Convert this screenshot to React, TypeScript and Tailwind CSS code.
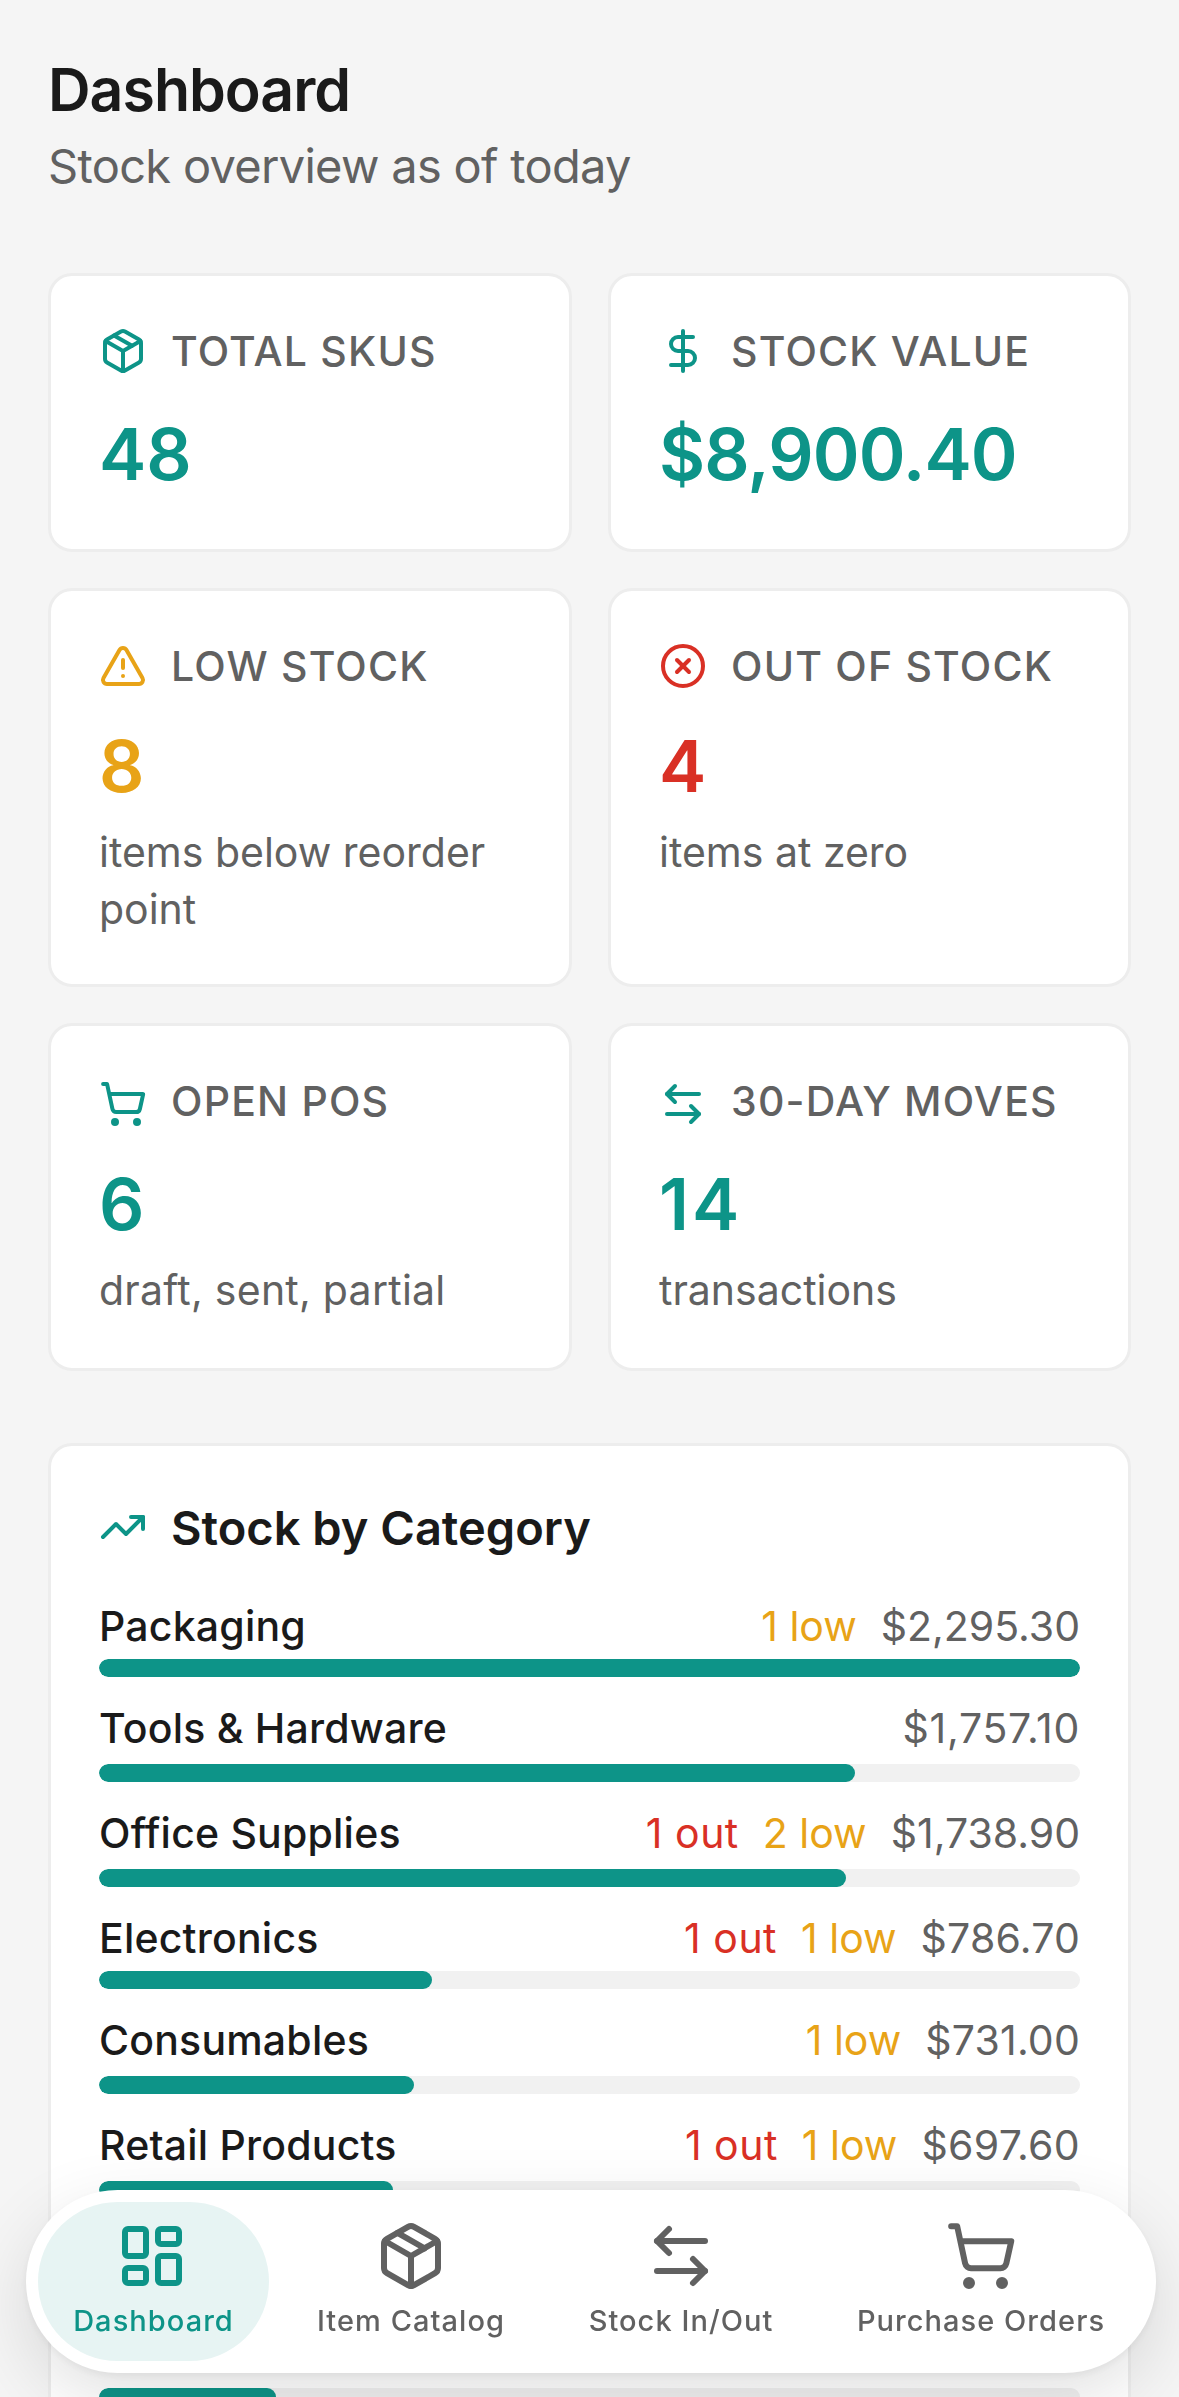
import {
    ArrowLeftRight,
    CircleX,
    DollarSign,
    LayoutDashboard,
    Package,
    ShoppingCart,
    TrendingUp,
    TriangleAlert,
    type LucideIcon,
} from 'lucide-react';
import { clsx } from 'clsx';

interface Stat {
    label: string;
    value: string;
    note?: string;
    icon: LucideIcon;
    color: string;
    valueClass?: string;
    iconClass?: string;
    noteClass?: string;
}

const stats: Stat[] = [
    { label: 'Total SKUs', value: '48', icon: Package, color: 'text-[#0d9488]', valueClass: 'mt-[33px]' },
    { label: 'Stock Value', value: '$8,900.40', icon: DollarSign, color: 'text-[#0d9488]', valueClass: 'mt-[33px] tracking-[-0.9px]' },
    { label: 'Low Stock', value: '8', note: 'items below reorder point', icon: TriangleAlert, color: 'text-[#e8a317]', valueClass: 'mt-[30px]' },
    { label: 'Out of Stock', value: '4', note: 'items at zero', icon: CircleX, color: 'text-[#d93025]', valueClass: 'mt-[30px]' },
    { label: 'Open POs', value: '6', note: 'draft, sent, partial', icon: ShoppingCart, color: 'text-[#0d9488]', valueClass: 'mt-[33px]', iconClass: 'mt-1.5', noteClass: 'tracking-[0.25px]' },
    { label: '30-Day Moves', value: '14', note: 'transactions', icon: ArrowLeftRight, color: 'text-[#0d9488]', valueClass: 'mt-[33px] tracking-[3px]', iconClass: 'mt-1.5' },
];

interface Category {
    name: string;
    value: string;
    percent: number;
    out?: number;
    low?: number;
    barClass: string;
    valueClass?: string;
}

const categories: Category[] = [
    { name: 'Packaging', value: '$2,295.30', percent: 100, low: 1, barClass: 'mt-1.5' },
    { name: 'Tools & Hardware', value: '$1,757.10', percent: 77.1, barClass: 'mt-[9px]', valueClass: 'tracking-[0.75px]' },
    { name: 'Office Supplies', value: '$1,738.90', percent: 76.1, out: 1, low: 2, barClass: 'mt-[9px]' },
    { name: 'Electronics', value: '$786.70', percent: 33.95, out: 1, low: 1, barClass: 'mt-1.5', valueClass: 'tracking-[0.2px]' },
    { name: 'Consumables', value: '$731.00', percent: 32.1, low: 1, barClass: 'mt-[9px]', valueClass: 'tracking-[0.2px]' },
    { name: 'Retail Products', value: '$697.60', percent: 30, out: 1, low: 1, barClass: 'mt-[9px]', valueClass: 'tracking-[0.3px]' },
    { name: '', value: '', percent: 24, barClass: 'mt-1.5' },
    { name: '', value: '', percent: 18.05, barClass: 'mt-[9px]' },
];

const navItems = [
    { name: 'Dashboard', icon: LayoutDashboard, width: 'w-[231px]', active: true },
    { name: 'Item Catalog', icon: Package, width: 'w-[260px]' },
    { name: 'Stock In/Out', icon: ArrowLeftRight, width: 'w-[256px]' },
    { name: 'Purchase Orders', icon: ShoppingCart, width: 'w-[320px]' },
];

const StatCard = ({ label, value, note, icon: Icon, color, valueClass, iconClass, noteClass }: Stat) => (
    <div className="rounded-3xl border-3 border-[#ededed] bg-white p-12">
        <div className="flex h-[54px] items-center gap-6">
            <Icon className={clsx('size-12 shrink-0', color, iconClass)} />
            <span className="text-[41px] leading-[54px] font-medium tracking-[1.2px] whitespace-nowrap text-[#616161] uppercase">
                {label}
            </span>
        </div>
        <p className={clsx('text-[71px] leading-[87px] font-semibold', color, valueClass)}>
            {value}
        </p>
        {note && (
            <p className={clsx('mt-3.5 text-[41px] leading-[57px] text-[#616161]', noteClass)}>
                {note}
            </p>
        )}
    </div>
);

const CategoryRow = ({ name, value, percent, out, low, barClass, valueClass }: Category) => (
    <div>
        <div className="flex h-[54px] items-center justify-between text-[41px] leading-[54px] whitespace-nowrap">
            <span className="font-medium tracking-[0.2px] text-[#1a1a1a]">{name}</span>
            <div className="flex gap-6">
                {out && <span className="tracking-[0.5px] text-[#d93025]">{out} out</span>}
                {low && <span className="text-[#e8a317]">{low} low</span>}
                <span className={clsx('text-[#616161]', valueClass)}>{value}</span>
            </div>
        </div>
        <div className={clsx('h-[18px] overflow-hidden rounded-[9px] bg-[#f1f1f1]', barClass)}>
            <div
                className="h-full rounded-[9px] bg-[#0d9488]"
                style={{ width: `${percent}%` }}
            />
        </div>
    </div>
);

const BottomNav = () => (
    <nav className="fixed bottom-6 left-[26px] flex h-[183px] w-[1130px] gap-3 rounded-full bg-white p-3 shadow-[0_24px_72px_rgba(0,0,0,0.12),0_3px_9px_rgba(0,0,0,0.06)]">
        {navItems.map(({ name, icon: Icon, width, active }) => (
            <a
                key={name}
                href="#"
                className={clsx(
                    'flex shrink-0 flex-col items-center rounded-full pt-[18px]',
                    width,
                    active ? 'bg-[#e7f4f3] text-[#0d9488]' : 'text-[#616161]'
                )}
            >
                <Icon className={clsx('size-[72px]', active && 'mr-1')} />
                <span className="mt-[11px] text-[29px] leading-9 font-medium tracking-[1.05px] whitespace-nowrap">
                    {name}
                </span>
            </a>
        ))}
    </nav>
);

const App = () => {
    return (
        <div className="h-[2397px] overflow-hidden bg-[#f5f5f5] px-12 pt-[51px] font-['Inter','Noto_Sans',sans-serif]">
            <header>
                <h1 className="text-[59px] leading-[78px] font-semibold tracking-[-1px] text-[#1a1a1a]">
                    Dashboard
                </h1>
                <p className="mt-1 text-[47px] leading-[66px] tracking-[-0.7px] text-[#616161]">
                    Stock overview as of today
                </p>
            </header>

            <section className="mt-[74px] grid grid-cols-[524px_523px] grid-rows-[279px_399px_348px] gap-9">
                {stats.map((stat) => (
                    <StatCard key={stat.label} {...stat} />
                ))}
            </section>

            <section className="mt-[72px] rounded-3xl border-3 border-[#ededed] bg-white p-12">
                <div className="flex h-[66px] items-center gap-6">
                    <TrendingUp className="size-12 text-[#0d9488]" />
                    <h2 className="pt-px text-[47px] leading-[66px] font-semibold text-[#1a1a1a]">
                        Stock by Category
                    </h2>
                </div>
                <div className="mt-[39px] flex flex-col gap-6">
                    {categories.map((category, i) => (
                        <CategoryRow key={i} {...category} />
                    ))}
                </div>
            </section>

            <BottomNav />
        </div>
    );
};

export default App;
